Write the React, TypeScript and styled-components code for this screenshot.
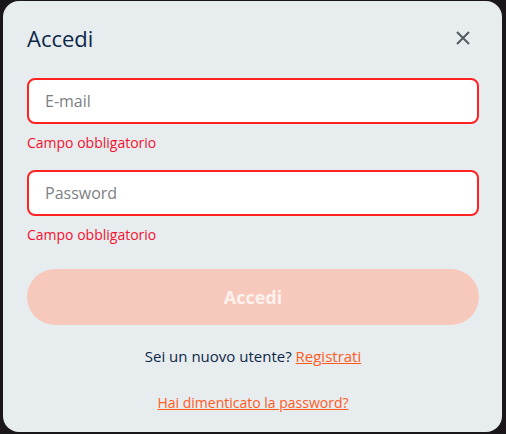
import React from "react";
import styled, { createGlobalStyle } from "styled-components";

const Global = createGlobalStyle`
  html, body { margin: 0; padding: 0; background: #1b1619; }
  body { font-family: "Open Sans", "Noto Sans", sans-serif; }
  * { box-sizing: border-box; }
`;

const Backdrop = styled.div`
  width: 506px;
  height: 434px;
  padding: 1px 4px 2px 3px;
  background: #1b1619;
`;

const Modal = styled.div`
  width: 100%;
  height: 100%;
  background: #e7ecef;
  border-radius: 16px;
  padding: 22px 23px 0 24px;
  display: flex;
  flex-direction: column;
`;

const Header = styled.div`
  display: flex;
  align-items: center;
  justify-content: space-between;
  height: 30px;
  margin-bottom: 25px;
`;

const Title = styled.h2`
  margin: 0;
  font-size: 22px;
  font-weight: 400;
  color: #0c2746;
  line-height: 30px;
`;

const CloseButton = styled.button`
  border: none;
  background: transparent;
  padding: 0;
  width: 20px;
  height: 20px;
  margin-right: 6px;
  display: flex;
  align-items: center;
  justify-content: center;
  cursor: pointer;
`;

const Field = styled.div`
  display: flex;
  flex-direction: column;
`;

const Input = styled.input<{ $error?: boolean }>`
  width: 100%;
  height: 46px;
  border: 2px solid ${(p) => (p.$error ? "#ff2222" : "#ccc")};
  border-radius: 8px;
  background: #fff;
  padding: 0 16px;
  font-family: inherit;
  font-size: 16px;
  color: #222;
  outline: none;
  &::placeholder { color: #7d7f84; }
`;

const ErrorText = styled.div`
  color: #f5102e;
  font-size: 14px;
  line-height: 20px;
  margin-top: 9px;
  margin-bottom: 17px;
`;

const SubmitButton = styled.button`
  margin-top: 7px;
  height: 56px;
  width: 100%;
  border: none;
  border-radius: 28px;
  background: #f7c9bd;
  color: #fdf1ee;
  font-family: inherit;
  font-weight: 700;
  font-size: 18px;
`;

const Footer = styled.div`
  display: flex;
  flex-direction: column;
  align-items: center;
  margin-top: 20px;
  gap: 25px;
`;

const Prompt = styled.div`
  font-size: 15px;
  line-height: 22px;
  color: #0c2746;
`;

const Link = styled.a<{ $size?: number }>`
  color: #ff5b1e;
  text-decoration: underline;
  font-size: ${(p) => p.$size ?? 14}px;
  line-height: 22px;
  cursor: pointer;
`;

export default function App() {
  return (
    <>
      <Global />
      <Backdrop>
        <Modal>
          <Header>
            <Title>Accedi</Title>
            <CloseButton aria-label="Chiudi">
              <svg width="16" height="16" viewBox="0 0 16 16">
                <path d="M2 2 L14 14 M14 2 L2 14" stroke="#555b63" strokeWidth="2" />
              </svg>
            </CloseButton>
          </Header>
          <Field>
            <Input $error placeholder="E-mail" />
            <ErrorText>Campo obbligatorio</ErrorText>
          </Field>
          <Field>
            <Input $error type="password" placeholder="Password" />
            <ErrorText>Campo obbligatorio</ErrorText>
          </Field>
          <SubmitButton disabled>Accedi</SubmitButton>
          <Footer>
            <Prompt>
              Sei un nuovo utente? <Link $size={15}>Registrati</Link>
            </Prompt>
            <Link>Hai dimenticato la password?</Link>
          </Footer>
        </Modal>
      </Backdrop>
    </>
  );
}
